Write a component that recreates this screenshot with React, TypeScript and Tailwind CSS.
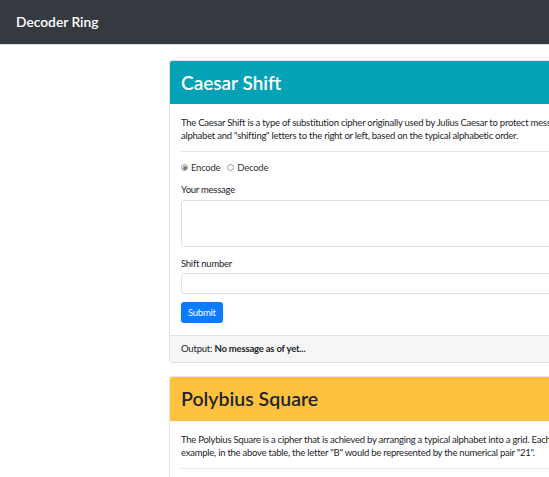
import React from "react";

const font = { fontFamily: 'Lato, "Noto Sans", sans-serif' };

export default function App() {
  return (
    <div className="w-[549px] h-[477px] overflow-hidden bg-white text-[#212529]" style={font}>
      <nav className="h-[45px] bg-[#343a40] flex items-center pl-[16px] border-b border-[#dee2e6]">
        <span className="text-white text-[13.8px] font-semibold leading-none">Decoder Ring</span>
      </nav>
      <div className="pl-[169px] pt-[15px] flex flex-col gap-[13px]">
        <div className="w-[600px] border border-[#dfdfdf] rounded-[3px] overflow-hidden">
          <div className="h-[43px] bg-[#03a2b6] flex items-center px-[11px]">
            <h2 className="text-white text-[19px] font-semibold leading-none">Caesar Shift</h2>
          </div>
          <div className="px-[11px] pt-[12px] text-[9.5px] leading-[13px] tracking-[-0.25px]">
            <p className="whitespace-nowrap">
              The Caesar Shift is a type of substitution cipher originally used by Julius Caesar to protect messages by shifting the
              <br />
              alphabet and "shifting" letters to the right or left, based on the typical alphabetic order.
            </p>
            <div className="h-px bg-[#e5e5e5] mt-[9px]" />
            <div className="flex items-center gap-[7px] mt-[9px] text-[#333]">
              <label className="flex items-center gap-[3px]">
                <span className="w-[7px] h-[7px] rounded-full border border-[#999] flex items-center justify-center">
                  <span className="w-[4px] h-[4px] rounded-full bg-[#777]" />
                </span>
                Encode
              </label>
              <label className="flex items-center gap-[3px]">
                <span className="w-[7px] h-[7px] rounded-full border border-[#999]" />
                Decode
              </label>
            </div>
            <div className="mt-[9px]">Your message</div>
            <div className="mt-[4px] h-[47px] border border-[#dbe0e2] rounded-[3px]" />
            <div className="mt-[10px]">Shift number</div>
            <div className="mt-[3px] h-[21px] border border-[#e0e0e6] rounded-[3px]" />
            <button className="mt-[8px] h-[21px] px-[7px] bg-[#0a7cff] text-white rounded-[3px] leading-none">
              Submit
            </button>
            <div className="h-[12px]" />
          </div>
          <div className="h-[27px] bg-[#f6f6f6] border-t border-[#e2e2e2] flex items-center px-[11px] text-[9.5px] tracking-[-0.2px]">
            Output:&nbsp;<b className="font-bold">No message as of yet...</b>
          </div>
        </div>
        <div className="w-[600px] border border-[#e5e5e5] rounded-[3px] overflow-hidden">
          <div className="h-[44px] bg-[#fec23f] flex items-center px-[11px]">
            <h2 className="text-[#212529] text-[19.5px] font-semibold leading-none">Polybius Square</h2>
          </div>
          <div className="px-[11px] pt-[12px] pb-[20px] text-[9.5px] leading-[13px] tracking-[-0.25px]">
            <p className="whitespace-nowrap">
              The Polybius Square is a cipher that is achieved by arranging a typical alphabet into a grid. Each letter is then represented
              <br />
              example, in the above table, the letter "B" would be represented by the numerical pair "21".
            </p>
            <div className="h-px bg-[#e5e5e5] mt-[9px]" />
          </div>
        </div>
      </div>
    </div>
  );
}
